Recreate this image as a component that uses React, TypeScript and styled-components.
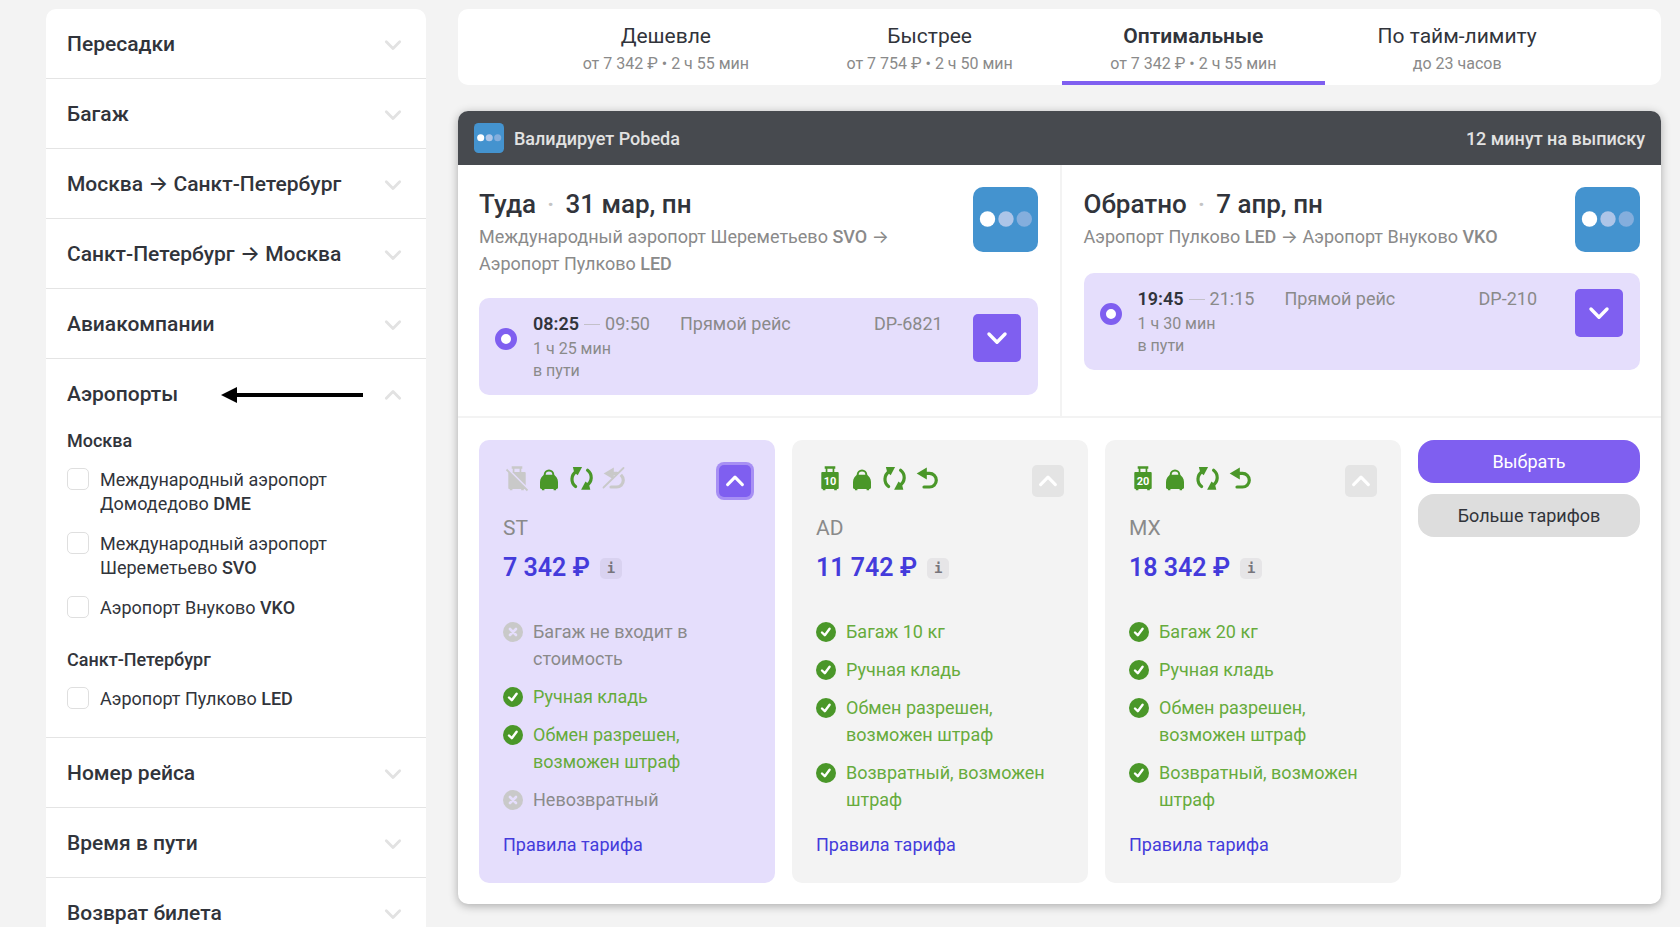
import React from "react";
import styled, { createGlobalStyle, css } from "styled-components";

const color = {
  page: "#f3f3f3",
  text: "#31343b",
  muted: "#8a8a8a",
  line: "#e4e4e4",
  softLine: "#f3f3f3",
  purple: "#7f5ff0",
  lilac: "#e5defc",
  price: "#443bdb",
  green: "#4a9729",
  greenText: "#66ab3c",
  grayIcon: "#c9c9c9",
};

const GlobalStyle = createGlobalStyle`
  *, *::before, *::after { box-sizing: border-box; }
  body {
    margin: 0;
    background: ${color.page};
    color: ${color.text};
    font-family: Roboto, Inter, "Liberation Sans", sans-serif;
    font-size: 18px;
    line-height: 27px;
  }
  button, input { font: inherit; color: inherit; }
  h2, h3, h4, p, ul { margin: 0; padding: 0; font: inherit; }
  ul { list-style: none; }
`;

const Page = styled.div`
  display: flex;
  align-items: flex-start;
  gap: 32px;
  padding: 9px 19px 0 46px;
`;

/* ---------- filters ---------- */

const Sidebar = styled.aside`
  flex: 0 0 380px;
  background: #fff;
  border-radius: 10px 10px 0 0;
`;

const FilterSection = styled.section`
  border-bottom: 1px solid ${color.line};
`;

const FilterHeader = styled.button`
  display: flex;
  align-items: center;
  gap: 20px;
  width: 100%;
  height: 69px;
  padding: 2px 23px 0 21px;
  border: 0;
  background: none;
  font-size: 21px;
  font-weight: 500;
  text-align: left;
  cursor: pointer;
`;

const FilterTitle = styled.span`
  flex: 1;
`;

const FilterBody = styled.div`
  padding: 0 21px 26px;
`;

const FilterGroup = styled.fieldset`
  min-width: 0;
  margin: 0;
  padding: 0;
  border: 0;

  & + & {
    margin-top: 27px;
  }
`;

const GroupName = styled.legend`
  padding: 0;
  margin-bottom: 14px;
  line-height: 26px;
  font-weight: 500;
`;

const Option = styled.label`
  display: flex;
  align-items: flex-start;
  gap: 11px;
  line-height: 24px;

  & + & {
    margin-top: 16px;
  }
`;

const Checkbox = styled.input`
  appearance: none;
  flex: none;
  width: 22px;
  height: 22px;
  margin: 0;
  border: 1px solid #dfdfdf;
  border-radius: 5px;
  background: #fff;
`;

const OptionText = styled.span`
  max-width: 250px;
`;

const Code = styled.b`
  font-weight: 500;
`;

/* ---------- sorting tabs ---------- */

const Main = styled.main`
  flex: 1;
  min-width: 0;
`;

const Tabs = styled.div`
  display: grid;
  grid-template-columns: repeat(4, 22%);
  justify-content: center;
  padding-left: 4px;
  background: #fff;
  border-radius: 10px;
`;

const Tab = styled.button<{ $active?: boolean }>`
  height: 76px;
  padding: 7px 0 0;
  border: 0;
  border-bottom: 4px solid ${(p) => (p.$active ? color.purple : "transparent")};
  background: none;
  cursor: pointer;
`;

const TabTitle = styled.span<{ $active?: boolean }>`
  display: block;
  font-size: 21px;
  line-height: 30px;
  font-weight: ${(p) => (p.$active ? 600 : 400)};
`;

const TabNote = styled.span`
  display: block;
  color: ${color.muted};
  font-size: 16px;
  line-height: 26px;
`;

/* ---------- ticket ---------- */

const Ticket = styled.article`
  margin-top: 26px;
  border-radius: 10px;
  background: #fff;
  box-shadow: 0 2px 10px rgba(0, 0, 0, 0.3);
  overflow: hidden;
`;

const TicketShell = styled.div`
  padding-bottom: 24px;
`;

const TicketHeader = styled.header`
  display: flex;
  align-items: center;
  gap: 10px;
  height: 54px;
  padding: 0 16px;
  background: #474a4f;
  color: #e2e2e2;
  font-weight: 500;
`;

const Deadline = styled.span`
  margin-left: auto;
`;

const Segments = styled.div`
  display: grid;
  grid-template-columns: 1fr 1fr;
  border-bottom: 2px solid ${color.softLine};
`;

const Segment = styled.section`
  display: flex;
  flex-direction: column;
  gap: 21px;
  padding: 22px 22px 21px 21px;

  & + & {
    padding: 22px 21px 21px 22px;
    border-left: 2px solid ${color.softLine};
  }
`;

const SegmentTop = styled.div`
  display: flex;
  justify-content: space-between;
  align-items: flex-start;
  gap: 20px;
`;

const Direction = styled.h3`
  margin-bottom: 2px;
  font-size: 26px;
  line-height: 34px;
  font-weight: 500;
`;

const Dot = styled.span`
  margin: 0 11px;
  color: #c4c4c4;
`;

const Route = styled.p`
  max-width: 440px;
  color: ${color.muted};
`;

const FlightBox = styled.div`
  display: flex;
  align-items: flex-start;
  padding: 14px 17px 13px 16px;
  border-radius: 10px;
  background: ${color.lilac};
`;

const Ring = styled.input`
  appearance: none;
  flex: none;
  width: 22px;
  height: 22px;
  margin: 16px 16px 0 0;
  border: 6px solid ${color.purple};
  border-radius: 50%;
  background: #fff;
`;

const FlightGrid = styled.div`
  flex: 1;
  display: grid;
  grid-template-columns: 147px 194px auto;
  color: ${color.muted};
  line-height: 24px;
`;

const Times = styled.div`
  display: flex;
  align-items: center;
  gap: 5px;
`;

const Departure = styled.time`
  color: ${color.text};
  font-weight: 600;
`;

const Dash = styled.span`
  width: 16px;
  height: 1px;
  background: #c3c0c9;
`;

const Duration = styled.p`
  margin-top: 2px;
  width: 90px;
  font-size: 16px;
  line-height: 22px;
`;

const ExpandButton = styled.button`
  display: grid;
  place-items: center;
  flex: none;
  width: 48px;
  height: 48px;
  margin-top: 2px;
  padding: 0;
  border: 0;
  border-radius: 5px;
  background: ${color.purple};
  cursor: pointer;
`;

/* ---------- fares ---------- */

const Fares = styled.div`
  display: grid;
  grid-template-columns: repeat(3, 4fr) 3fr;
  gap: 17px;
  padding: 22px 21px 21px;
`;

const Fare = styled.section<{ $selected?: boolean }>`
  display: flex;
  flex-direction: column;
  padding: 25px 24px;
  border-radius: 10px;
  background: ${(p) => (p.$selected ? color.lilac : color.page)};
  --card: ${(p) => (p.$selected ? color.lilac : color.page)};
`;

const FareTop = styled.div`
  display: flex;
  align-items: flex-start;
  gap: 4px;
`;

const FareToggle = styled.button<{ $selected?: boolean }>`
  display: grid;
  place-items: center;
  width: 32px;
  height: 32px;
  margin-left: auto;
  padding: 0;
  border: 0;
  border-radius: 5px;
  background: #e4e4e4;
  cursor: pointer;
  ${(p) =>
    p.$selected &&
    css`
      background: ${color.purple};
      box-shadow: 0 0 0 3px #a78ff4;
    `}
`;

const FareName = styled.h4`
  margin-top: 18px;
  color: ${color.muted};
  font-size: 21px;
`;

const PriceRow = styled.div`
  display: flex;
  align-items: center;
  gap: 10px;
  height: 36px;
  margin-top: 8px;
  color: ${color.price};
  font-size: 25px;
  line-height: 36px;
  font-weight: 600;
`;

const InfoButton = styled.button`
  width: 22px;
  height: 21px;
  padding: 0;
  border: 0;
  border-radius: 5px;
  background: rgba(70, 60, 90, 0.07);
  color: #77757c;
  font: 700 14px/20px "DejaVu Sans Mono", monospace;
`;

const Features = styled.ul`
  display: grid;
  gap: 11px;
  margin: 32px 0 18px;
`;

const Feature = styled.li<{ $on: boolean }>`
  display: flex;
  gap: 10px;
  color: ${(p) => (p.$on ? color.greenText : color.muted)};

  svg {
    flex: none;
    margin-top: 4px;
  }
`;

const FeatureText = styled.span`
  max-width: 208px;
`;

const RulesLink = styled.a`
  margin-top: auto;
  color: ${color.price};
  text-decoration: none;
`;

const Actions = styled.div`
  display: flex;
  flex-direction: column;
  gap: 11px;
`;

const Action = styled.button<{ $primary?: boolean }>`
  height: 43px;
  border: 0;
  border-radius: 16px;
  background: ${(p) => (p.$primary ? color.purple : "#dddddd")};
  color: ${(p) => (p.$primary ? "#fff" : color.text)};
  cursor: pointer;
`;

/* ---------- icons ---------- */

function Chevron({ up, stroke, size = 20 }: { up?: boolean; stroke: string; size?: number }) {
  return (
    <svg width={size} height={size} viewBox="0 0 20 20" fill="none" stroke={stroke} strokeWidth="2.8" strokeLinecap="round" strokeLinejoin="round" aria-hidden="true">
      <path d={up ? "M3.300 13.300 10 6.500l6.700 6.800" : "M3.300 6.700 10 13.500l6.700-6.800"} />
    </svg>
  );
}

function AirlineLogo({ size }: { size: number }) {
  return (
    <svg width={size} height={size} viewBox="0 0 65 65" role="img" aria-label="Pobeda">
      <rect width="65" height="65" rx="10" fill="#4493cf" />
      <circle cx="14.5" cy="32" r="7.7" fill="#fff" />
      <circle cx="33" cy="32" r="7.7" fill="#adc5e8" />
      <circle cx="51.3" cy="32" r="7.7" fill="#84aedd" />
    </svg>
  );
}

function PointerArrow() {
  return (
    <svg width="142" height="16" viewBox="0 0 142 16" aria-hidden="true">
      <path d="M0 8 16 0v16z" />
      <path d="M14 6h128v4H14z" />
    </svg>
  );
}

function Suitcase({ label }: { label?: string }) {
  return (
    <svg width="28" height="28" viewBox="0 0 28 28" fill={label ? color.green : color.grayIcon} aria-hidden="true">
      <path d="M8.7 1.2h10.6v2.6h-1V7h3.2c.8 0 1.2.4 1.2 1.2v14.6c0 .8-.4 1.2-1.2 1.2h-.7v1.3h-2.6V24H9.4v1.3H6.8V24h-.3c-.8 0-1.2-.4-1.2-1.2V8.200c0-.8.4-1.2 1.200-1.200h3.200V3.800h-1zM11.400 3.800V7h5.200V3.800z" />
      {label ? (
        <text x="14" y="19.500" textAnchor="middle" fill="#fff" fontFamily="Roboto, sans-serif" fontSize="11" fontWeight="700">
          {label}
        </text>
      ) : (
        <>
          <path d="M3 2.500 25 24.500" stroke="var(--card)" strokeWidth="2.500" />
          <path d="M3.500 4.500 24.500 25.500" stroke={color.grayIcon} strokeWidth="1.800" />
        </>
      )}
    </svg>
  );
}

function Bag() {
  return (
    <svg width="28" height="28" viewBox="0 0 28 28" fill={color.green} aria-hidden="true">
      <path d="M9.700 11.500V9.800a4.300 4.300 0 0 1 8.600 0v1.700" fill="none" stroke={color.green} strokeWidth="2" />
      <path d="M9 9.700h10c1.800 1.300 4 3.800 4 7.300v5.600c0 .9-.5 1.400-1.300 1.400h-.6v1.300h-2.500V24H9.400v1.300H6.900V24h-.6C5.500 24 5 23.500 5 22.600V17c0-3.500 2.200-6 4-7.300z" />
    </svg>
  );
}

const exchangeHalf = (
  <>
    <path d="M9.400 6.400C3.800 10 3.500 17.600 8.600 21.600" fill="none" stroke={color.green} strokeWidth="3.200" strokeLinecap="round" />
    <path d="M5.900 2h9.200l-4.400 8.200-3.500-3z" />
  </>
);

function Exchange() {
  return (
    <svg width="28" height="28" viewBox="0 0 28 28" fill={color.green} aria-hidden="true">
      {exchangeHalf}
      <g transform="rotate(180 14.600 13.400)">{exchangeHalf}</g>
    </svg>
  );
}

function Refund({ off }: { off?: boolean }) {
  const c = off ? color.grayIcon : color.green;
  return (
    <svg width="28" height="28" viewBox="0 0 28 28" fill="none" aria-hidden="true">
      <path d="M4.700 8.400 14.800 2.400v12z" fill={c} />
      <path d="M13 8.400h4.500a6.500 6.500 0 0 1 0 13.600H12" stroke={c} strokeWidth="3.200" strokeLinecap="round" />
      {off && (
        <>
          <path d="M3.500 25.500 25.500 4.500" stroke="var(--card)" strokeWidth="2.500" />
          <path d="M4.500 22.500 24.500 3" stroke={c} strokeWidth="1.800" strokeLinecap="round" />
        </>
      )}
    </svg>
  );
}

function StatusIcon({ on }: { on: boolean }) {
  return (
    <svg width="20" height="20" viewBox="0 0 20 20" fill="none" aria-hidden="true">
      <circle cx="10" cy="10" r="10" fill={on ? color.green : color.grayIcon} />
      <path
        d={on ? "M6 10.500 8.800 13.200 13.600 6.800" : "M7 7l6 6M13 7l-6 6"}
        stroke={on ? "#fff" : "var(--card)"}
        strokeWidth={on ? 2.400 : 2.600}
        strokeLinecap="round"
        strokeLinejoin="round"
      />
    </svg>
  );
}

/* ---------- data ---------- */

const filtersBefore = ["Пересадки", "Багаж", "Москва → Санкт-Петербург", "Санкт-Петербург → Москва", "Авиакомпании"];
const filtersAfter = ["Номер рейса", "Время в пути", "Возврат билета"];

const airportGroups = [
  {
    city: "Москва",
    airports: [
      ["Международный аэропорт Домодедово", "DME"],
      ["Международный аэропорт Шереметьево", "SVO"],
      ["Аэропорт Внуково", "VKO"],
    ],
  },
  { city: "Санкт-Петербург", airports: [["Аэропорт Пулково", "LED"]] },
];

const tabs = [
  { title: "Дешевле", note: "от 7 342 ₽ • 2 ч 55 мин" },
  { title: "Быстрее", note: "от 7 754 ₽ • 2 ч 50 мин" },
  { title: "Оптимальные", note: "от 7 342 ₽ • 2 ч 55 мин", active: true },
  { title: "По тайм-лимиту", note: "до 23 часов" },
];

const segments = [
  {
    direction: "Туда",
    date: "31 мар, пн",
    from: ["Международный аэропорт Шереметьево", "SVO"],
    to: ["Аэропорт Пулково", "LED"],
    departure: "08:25",
    arrival: "09:50",
    duration: "1 ч 25 мин",
    flight: "DP-6821",
  },
  {
    direction: "Обратно",
    date: "7 апр, пн",
    from: ["Аэропорт Пулково", "LED"],
    to: ["Аэропорт Внуково", "VKO"],
    departure: "19:45",
    arrival: "21:15",
    duration: "1 ч 30 мин",
    flight: "DP-210",
  },
];

type FareInfo = { name: string; price: string; bag?: string; selected?: boolean; features: [string, boolean][] };

const fares: FareInfo[] = [
  {
    name: "ST",
    price: "7 342 ₽",
    selected: true,
    features: [
      ["Багаж не входит в стоимость", false],
      ["Ручная кладь", true],
      ["Обмен разрешен, возможен штраф", true],
      ["Невозвратный", false],
    ],
  },
  {
    name: "AD",
    price: "11 742 ₽",
    bag: "10",
    features: [
      ["Багаж 10 кг", true],
      ["Ручная кладь", true],
      ["Обмен разрешен, возможен штраф", true],
      ["Возвратный, возможен штраф", true],
    ],
  },
  {
    name: "MX",
    price: "18 342 ₽",
    bag: "20",
    features: [
      ["Багаж 20 кг", true],
      ["Ручная кладь", true],
      ["Обмен разрешен, возможен штраф", true],
      ["Возвратный, возможен штраф", true],
    ],
  },
];

/* ---------- page ---------- */

function ClosedFilter({ title }: { title: string }) {
  return (
    <FilterSection>
      <FilterHeader type="button" aria-expanded="false">
        <FilterTitle>{title}</FilterTitle>
        <Chevron stroke="#e2e2e2" />
      </FilterHeader>
    </FilterSection>
  );
}

export default function App() {
  return (
    <>
      <GlobalStyle />
      <Page>
        <Sidebar>
          {filtersBefore.map((f) => (
            <ClosedFilter key={f} title={f} />
          ))}
          <FilterSection>
            <FilterHeader type="button" aria-expanded="true">
              <FilterTitle>Аэропорты</FilterTitle>
              <PointerArrow />
              <Chevron up stroke="#e2e2e2" />
            </FilterHeader>
            <FilterBody>
              {airportGroups.map((g) => (
                <FilterGroup key={g.city}>
                  <GroupName>{g.city}</GroupName>
                  {g.airports.map(([name, code]) => (
                    <Option key={code}>
                      <Checkbox type="checkbox" />
                      <OptionText>
                        {name} <Code>{code}</Code>
                      </OptionText>
                    </Option>
                  ))}
                </FilterGroup>
              ))}
            </FilterBody>
          </FilterSection>
          {filtersAfter.map((f) => (
            <ClosedFilter key={f} title={f} />
          ))}
        </Sidebar>

        <Main>
          <Tabs role="tablist">
            {tabs.map((t) => (
              <Tab key={t.title} type="button" role="tab" aria-selected={!!t.active} $active={t.active}>
                <TabTitle $active={t.active}>{t.title}</TabTitle>
                <TabNote>{t.note}</TabNote>
              </Tab>
            ))}
          </Tabs>

          <TicketShell>
            <Ticket>
              <TicketHeader>
                <AirlineLogo size={30} />
                <span>Валидирует Pobeda</span>
                <Deadline>12 минут на выписку</Deadline>
              </TicketHeader>

              <Segments>
                {segments.map((s) => (
                  <Segment key={s.direction}>
                    <SegmentTop>
                      <div>
                        <Direction>
                          {s.direction}
                          <Dot>·</Dot>
                          {s.date}
                        </Direction>
                        <Route>
                          {s.from[0]} <Code>{s.from[1]}</Code> → {s.to[0]} <Code>{s.to[1]}</Code>
                        </Route>
                      </div>
                      <AirlineLogo size={65} />
                    </SegmentTop>
                    <FlightBox>
                      <Ring type="radio" name={s.direction} aria-label={s.flight} defaultChecked />
                      <FlightGrid>
                        <div>
                          <Times>
                            <Departure>{s.departure}</Departure>
                            <Dash />
                            <time>{s.arrival}</time>
                          </Times>
                          <Duration>{s.duration} в пути</Duration>
                        </div>
                        <span>Прямой рейс</span>
                        <span>{s.flight}</span>
                      </FlightGrid>
                      <ExpandButton type="button" aria-label="Подробнее о рейсе">
                        <Chevron stroke="#fff" size={24} />
                      </ExpandButton>
                    </FlightBox>
                  </Segment>
                ))}
              </Segments>

              <Fares>
                {fares.map((f) => (
                  <Fare key={f.name} $selected={f.selected}>
                    <FareTop>
                      <Suitcase label={f.bag} />
                      <Bag />
                      <Exchange />
                      <Refund off={!f.bag} />
                      <FareToggle type="button" $selected={f.selected} aria-label="Свернуть тариф">
                        <Chevron up stroke="#fff" size={22} />
                      </FareToggle>
                    </FareTop>
                    <FareName>{f.name}</FareName>
                    <PriceRow>
                      {f.price}
                      <InfoButton type="button">i</InfoButton>
                    </PriceRow>
                    <Features>
                      {f.features.map(([text, on]) => (
                        <Feature key={text} $on={on}>
                          <StatusIcon on={on} />
                          <FeatureText>{text}</FeatureText>
                        </Feature>
                      ))}
                    </Features>
                    <RulesLink href="#rules">Правила тарифа</RulesLink>
                  </Fare>
                ))}
                <Actions>
                  <Action type="button" $primary>
                    Выбрать
                  </Action>
                  <Action type="button">Больше тарифов</Action>
                </Actions>
              </Fares>
            </Ticket>
          </TicketShell>
        </Main>
      </Page>
    </>
  );
}
